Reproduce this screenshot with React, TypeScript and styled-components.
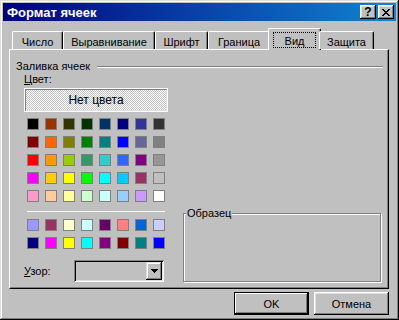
import React from "react";
import styled, { createGlobalStyle } from "styled-components";

const GlobalStyle = createGlobalStyle`
  html, body { margin: 0; padding: 0; background: #c0c0c0; }
  body {
    font-family: "Liberation Sans", Arial, sans-serif;
    font-size: 11px;
    color: #000;
  }
`;

const mainColors = [
  ["#000000", "#993300", "#333300", "#003300", "#003366", "#000080", "#333399", "#333333"],
  ["#800000", "#ff6600", "#808000", "#008000", "#008080", "#0000ff", "#666699", "#808080"],
  ["#ff0000", "#ff9900", "#99cc00", "#339966", "#33cccc", "#3366ff", "#800080", "#969696"],
  ["#ff00ff", "#ffcc00", "#ffff00", "#00ff00", "#00ffff", "#00ccff", "#993366", "#c0c0c0"],
  ["#ff99cc", "#ffcc99", "#ffff99", "#ccffcc", "#ccffff", "#99ccff", "#cc99ff", "#ffffff"],
];

const chartColors = [
  ["#9999ff", "#993366", "#ffffcc", "#ccffff", "#660066", "#ff8080", "#0066cc", "#ccccff"],
  ["#000080", "#ff00ff", "#ffff00", "#00ffff", "#800080", "#800000", "#008080", "#0000ff"],
];

const tabs = [
  { label: "Число", w: 51 },
  { label: "Выравнивание", w: 92 },
  { label: "Шрифт", w: 53 },
  { label: "Граница", w: 62 },
  { label: "Вид", w: 53, active: true },
  { label: "Защита", w: 55 },
];

const Window = styled.div`
  width: 399px;
  height: 320px;
  box-sizing: border-box;
  padding: 3px;
  background: #c0c0c0;
  box-shadow: inset -1px -1px #000, inset 1px 1px #dfdfdf, inset -2px -2px #808080, inset 2px 2px #fff;
  display: flex;
  flex-direction: column;
`;

const TitleBar = styled.div`
  height: 18px;
  display: flex;
  align-items: center;
  padding: 0 2px 0 4px;
  background: linear-gradient(to right, #000080, #1084d0);
`;

const Title = styled.div`
  flex: 1;
  color: #fff;
  font-weight: bold;
  font-size: 13px;
  line-height: 15px;
`;

const TitleButtons = styled.div`
  display: flex;
  gap: 2px;
`;

const TitleButton = styled.div`
  width: 16px;
  height: 14px;
  box-sizing: border-box;
  background: #c0c0c0;
  box-shadow: inset -1px -1px #000, inset 1px 1px #fff, inset -2px -2px #808080, inset 2px 2px #dfdfdf;
  display: flex;
  align-items: center;
  justify-content: center;
  font-weight: bold;
  font-size: 12px;
  line-height: 12px;
`;

const TabStrip = styled.div`
  display: flex;
  align-items: flex-end;
  height: 21px;
  margin: 7px 0 0 9px;
  position: relative;
  z-index: 1;
`;

const Tab = styled.div<{ $w: number; $active?: boolean }>`
  width: ${(p) => p.$w}px;
  height: ${(p) => (p.$active ? 22 : 18)}px;
  margin: ${(p) => (p.$active ? "0 -2px -1px" : "0")};
  box-sizing: border-box;
  background: #c0c0c0;
  border-top: 1px solid #fff;
  border-left: 1px solid #fff;
  border-right: 1px solid #000;
  border-radius: 2px 2px 0 0;
  box-shadow: inset -1px 0 #808080;
  padding-top: ${(p) => (p.$active ? 3 : 4)}px;
  text-align: center;
  line-height: 13px;
  white-space: nowrap;
`;

const FocusRect = styled.span`
  display: block;
  margin: 0 4px;
  height: 16px;
  box-sizing: border-box;
  border: 1px dotted #000;
  padding-top: 2px;
  line-height: 13px;
`;

const Panel = styled.div`
  width: 380px;
  height: 240px;
  margin-left: 6px;
  box-sizing: border-box;
  border-top: 1px solid #fff;
  border-left: 1px solid #fff;
  border-right: 1px solid #000;
  border-bottom: 1px solid #000;
  box-shadow: inset -1px -1px #808080;
  padding: 10px 5px 0 6px;
`;

const SectionHeader = styled.div`
  display: flex;
  align-items: center;
  height: 13px;
  line-height: 13px;
`;

const EtchedLine = styled.div`
  flex: 1;
  margin-left: 7px;
  height: 0;
  border-top: 1px solid #808080;
  border-bottom: 1px solid #fff;
`;

const Content = styled.div`
  display: flex;
  align-items: flex-end;
  padding-left: 8px;
`;

const LeftCol = styled.div`
  width: 144px;
  display: flex;
  flex-direction: column;
`;

const Label = styled.div`
  line-height: 13px;
  height: 13px;
`;

const NoColorButton = styled.div`
  margin-top: 2px;
  height: 24px;
  box-sizing: border-box;
  border: 1px solid #fff;
  box-shadow: inset 1px 1px #808080, inset -1px -1px #dfdfdf;
  background: repeating-conic-gradient(#fff 0 25%, #c0c0c0 0 50%) 0 0 / 2px 2px;
  display: flex;
  align-items: center;
  justify-content: center;
  font-size: 12px;
`;

const SwatchGrid = styled.div<{ $top: number }>`
  display: grid;
  grid-template-columns: repeat(8, 12px);
  gap: 6px;
  margin: ${(p) => p.$top}px 3px 0;
`;

const Swatch = styled.div<{ $c: string }>`
  width: 12px;
  height: 12px;
  box-sizing: border-box;
  border: 1px solid #808080;
  background: ${(p) => p.$c};
`;

const Separator = styled.div`
  margin: 9px 3px 0;
  height: 1px;
  background: #fff;
`;

const PatternRow = styled.div`
  margin-top: 11px;
  display: flex;
  align-items: center;
`;

const PatternLabel = styled.div`
  width: 50px;
  line-height: 13px;
`;

const Combo = styled.div`
  width: 90px;
  height: 22px;
  box-sizing: border-box;
  padding: 2px;
  background: #c0c0c0;
  box-shadow: inset 1px 1px #808080, inset -1px -1px #fff, inset 2px 2px #000, inset -2px -2px #dfdfdf;
  display: flex;
  justify-content: flex-end;
`;

const DropButton = styled.div`
  width: 16px;
  height: 18px;
  box-sizing: border-box;
  background: #c0c0c0;
  box-shadow: inset -1px -1px #000, inset 1px 1px #dfdfdf, inset -2px -2px #808080, inset 2px 2px #fff;
  display: flex;
  align-items: center;
  justify-content: center;
`;

const SampleBox = styled.div`
  position: relative;
  margin-left: 15px;
  width: 198px;
  height: 69px;
  box-sizing: border-box;
  border: 1px solid #808080;
  box-shadow: inset 1px 1px #fff, 1px 1px #fff;
`;

const SampleLabel = styled.span`
  position: absolute;
  top: -7px;
  left: 2px;
  padding: 0 1px;
  background: #c0c0c0;
  line-height: 13px;
`;

const Footer = styled.div`
  display: flex;
  justify-content: flex-end;
  gap: 5px;
  margin-top: 3px;
  padding-right: 7px;
`;

const Button = styled.div<{ $default?: boolean }>`
  width: 75px;
  height: 23px;
  box-sizing: border-box;
  background: #c0c0c0;
  display: flex;
  align-items: center;
  justify-content: center;
  border: ${(p) => (p.$default ? "1px solid #000" : "none")};
  box-shadow: inset -1px -1px #000, inset 1px 1px #fff, inset -2px -2px #808080,
    inset 2px 2px ${(p) => (p.$default ? "#c0c0c0" : "#dfdfdf")};
`;

const CloseGlyph = () => (
  <svg width="8" height="7" viewBox="0 0 8 7" shapeRendering="crispEdges">
    <path d="M0 0h2v1H0zM6 0h2v1H6zM1 1h2v1H1zM5 1h2v1H5zM2 2h4v1H2zM3 3h2v1H3zM2 4h4v1H2zM1 5h2v1H1zM5 5h2v1H5zM0 6h2v1H0zM6 6h2v1H6z" fill="#000" />
  </svg>
);

const DownArrow = () => (
  <svg width="7" height="4" viewBox="0 0 7 4" shapeRendering="crispEdges">
    <path d="M0 0h7v1H0zM1 1h5v1H1zM2 2h3v1H2zM3 3h1v1H3z" fill="#000" />
  </svg>
);

export default function App() {
  return (
    <>
      <GlobalStyle />
      <Window>
        <TitleBar>
          <Title>Формат ячеек</Title>
          <TitleButtons>
            <TitleButton>?</TitleButton>
            <TitleButton>
              <CloseGlyph />
            </TitleButton>
          </TitleButtons>
        </TitleBar>

        <TabStrip>
          {tabs.map((t) => (
            <Tab key={t.label} $w={t.w} $active={t.active}>
              {t.active ? <FocusRect>{t.label}</FocusRect> : t.label}
            </Tab>
          ))}
        </TabStrip>

        <Panel>
          <SectionHeader>
            <span>Заливка ячеек</span>
            <EtchedLine />
          </SectionHeader>
          <Content>
            <LeftCol>
              <Label>
                <u>Ц</u>вет:
              </Label>
              <NoColorButton>Нет цвета</NoColorButton>
              <SwatchGrid $top={6}>
                {mainColors.flat().map((c, i) => (
                  <Swatch key={i} $c={c} />
                ))}
              </SwatchGrid>
              <Separator />
              <SwatchGrid $top={7}>
                {chartColors.flat().map((c, i) => (
                  <Swatch key={i} $c={c} />
                ))}
              </SwatchGrid>
              <PatternRow>
                <PatternLabel>
                  <u>У</u>зор:
                </PatternLabel>
                <Combo>
                  <DropButton>
                    <DownArrow />
                  </DropButton>
                </Combo>
              </PatternRow>
            </LeftCol>
            <SampleBox>
              <SampleLabel>Образец</SampleLabel>
            </SampleBox>
          </Content>
        </Panel>

        <Footer>
          <Button $default>OK</Button>
          <Button>Отмена</Button>
        </Footer>
      </Window>
    </>
  );
}
